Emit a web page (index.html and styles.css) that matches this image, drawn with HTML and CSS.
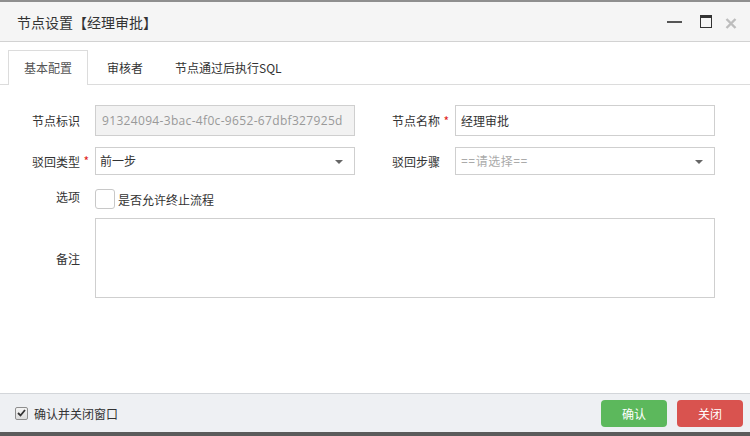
FILE: index.html
```html
<!DOCTYPE html>
<html lang="zh-CN">
<head>
  <meta charset="UTF-8">
  <link rel="stylesheet" href="styles.css">
</head>
<body>
  <div class="dialog">
    <!-- 标题栏 -->
    <div class="dialog-header">
      <span class="dialog-title">节点设置【经理审批】</span>
      <div class="win-tools">
        <span class="tool-min"></span>
        <span class="tool-max"></span>
        <span class="tool-close">
          <svg width="12" height="11" viewBox="0 0 12 11">
            <path d="M1.5 1 L10.5 10 M10.5 1 L1.5 10" stroke="#bdbdbd" stroke-width="2.4" fill="none"/>
          </svg>
        </span>
      </div>
    </div>

    <div class="dialog-body">
      <!-- 选项卡 -->
      <ul class="tabs">
        <li class="active">基本配置</li>
        <li>审核者</li>
        <li>节点通过后执行SQL</li>
      </ul>

      <!-- 基本配置表单 -->
      <div class="form-grid">
        <label class="form-label">节点标识</label>
        <input class="form-input" type="text" value="91324094-3bac-4f0c-9652-67dbf327925d" disabled>
        <label class="form-label required">节点名称</label>
        <input class="form-input" type="text" value="经理审批">

        <label class="form-label required">驳回类型</label>
        <div class="select-wrap">
          <select class="form-select">
            <option>前一步</option>
          </select>
        </div>
        <label class="form-label">驳回步骤</label>
        <div class="select-wrap">
          <select class="form-select placeholder">
            <option>==请选择==</option>
          </select>
        </div>

        <label class="form-label">选项</label>
        <div class="check-row">
          <span class="check-box"></span>
          <span class="check-text">是否允许终止流程</span>
        </div>

        <label class="form-label">备注</label>
        <textarea class="form-textarea"></textarea>
      </div>
    </div>

    <!-- 底部按钮 -->
    <div class="dialog-footer">
      <label class="footer-check">
        <span class="mini-check">
          <svg width="9" height="8" viewBox="0 0 9 8">
            <path d="M1 4 L3.5 6.5 L8 1" stroke="#333" stroke-width="1.8" fill="none"/>
          </svg>
        </span>
        确认并关闭窗口
      </label>
      <div class="footer-buttons">
        <button class="btn btn-ok">确认</button>
        <button class="btn btn-close">关闭</button>
      </div>
    </div>
  </div>
</body>
</html>
```

FILE: styles.css
```css
/* 基本 */
html, body {
  margin: 0;
  padding: 0;
  background: #5b5b5b;
}
body {
  font-family: "Open Sans", "Noto Sans CJK SC", sans-serif;
  font-size: 12px;
  color: #333;
}

/* 弹窗整体 */
.dialog {
  width: 750px;
  height: 436px;
  box-sizing: border-box;
  border-top: 2px solid #8f8f8f;
  border-bottom: 4px solid #5b5b5b;
  background: #fff;
  display: flex;
  flex-direction: column;
}

/* 标题栏 */
.dialog-header {
  height: 39px;
  flex: none;
  background: #f5f5f5;
  border-bottom: 1px solid #d2d2d2;
  display: flex;
  align-items: center;
  justify-content: space-between;
  padding: 0 13px 0 17px;
}
.dialog-title {
  font-family: "Noto Sans CJK SC", sans-serif;
  font-size: 14px;
  line-height: 20px;
  color: #333;
}
.win-tools {
  display: flex;
  align-items: center;
  height: 100%;
}
.tool-min {
  width: 15px;
  height: 2px;
  background: #555;
}
.tool-max {
  width: 10px;
  height: 9px;
  border: 1px solid #333;
  border-top-width: 3px;
  margin-left: 18px;
  margin-bottom: 1px;
}
.tool-close {
  display: flex;
  margin-left: 13px;
  margin-top: 4px;
}

/* 内容区 */
.dialog-body {
  flex: 1;
  min-height: 0;
}

/* 选项卡 */
.tabs {
  list-style: none;
  margin: 0;
  padding: 8px 0 0 8px;
  display: flex;
  border-bottom: 1px solid #dcdcdc;
}
.tabs li {
  font-family: "Noto Sans CJK SC", sans-serif;
  height: 33px;
  line-height: 33px;
  padding: 0 15px;
  border: 1px solid transparent;
  border-bottom: none;
  margin-right: 3px;
  margin-bottom: -1px;
  color: #333;
}
.tabs li:last-child {
  padding-left: 12px;
}
.tabs li.active {
  background: #fff;
  border-color: #dcdcdc;
  height: 34px;
  color: #555;
}

/* 表单布局 */
.form-grid {
  display: grid;
  grid-template-columns: 95px 260px 100px 260px;
  grid-template-rows: 31px 28px 21px 80px;
  row-gap: 11px;
  padding-top: 20px;
}
.form-label {
  font-family: "Noto Sans CJK SC", sans-serif;
  display: flex;
  align-items: center;
  justify-content: flex-end;
  padding-right: 15px;
  position: relative;
  color: #333;
}
.form-label.required::after {
  content: "*";
  position: absolute;
  right: 6px;
  top: 50%;
  margin-top: -8px;
  color: #e02020;
  font-size: 12px;
  line-height: 16px;
}

.form-input,
.form-select,
.form-textarea {
  box-sizing: border-box;
  border: 1px solid #cfcfcf;
  border-radius: 0;
  font-family: "Open Sans", "Noto Sans CJK SC", sans-serif;
  font-size: 12px;
  color: #333;
  background: #fff;
  margin: 0;
  outline: none;
}
.form-input {
  height: 31px;
  padding: 0 5px;
}
.form-input:disabled {
  background: #f2f2f2;
  color: #999;
  letter-spacing: 0.33px;
  padding-left: 6px;
}

/* 下拉框 */
.select-wrap {
  position: relative;
}
.select-wrap::after {
  content: "";
  position: absolute;
  right: 12px;
  top: 13px;
  border-left: 4px solid transparent;
  border-right: 4px solid transparent;
  border-top: 4px solid #666;
  pointer-events: none;
}
.form-select {
  -webkit-appearance: none;
  appearance: none;
  width: 100%;
  height: 28px;
  padding: 0 4px;
}
.form-select.placeholder {
  color: #aaa;
  padding-left: 5px;
  letter-spacing: 0.5px;
}

/* 选项勾选框 */
.check-row {
  display: flex;
  align-items: center;
  margin-top: 3px;
  align-self: start;
  grid-column: 2 / span 3;
}
.check-box {
  width: 18px;
  height: 18px;
  border: 1px solid #c8c8c8;
  border-radius: 3px;
  background: #fff;
}
.check-text {
  font-family: "Noto Sans CJK SC", sans-serif;
  margin-left: 3px;
  color: #333;
}

.form-textarea {
  grid-column: 2 / span 3;
  height: 80px;
  resize: none;
}

/* 底部 */
.dialog-footer {
  flex: none;
  height: 38px;
  background: #eef0f3;
  border-top: 1px solid #d3d6da;
  display: flex;
  align-items: center;
  justify-content: space-between;
  padding: 0 7px 0 15px;
}
.footer-check {
  font-family: "Noto Sans CJK SC", sans-serif;
  display: flex;
  align-items: center;
  color: #333;
}
.mini-check {
  width: 11px;
  height: 11px;
  border: 1px solid #8e8e8e;
  border-radius: 2px;
  background: linear-gradient(#f4f4f4, #dcdcdc);
  display: flex;
  align-items: center;
  justify-content: center;
  margin-right: 6px;
}
.footer-buttons {
  display: flex;
  gap: 10px;
  margin-top: 1px;
}
.btn {
  width: 66px;
  height: 27px;
  border: none;
  border-radius: 4px;
  color: #fff;
  font-family: "Noto Sans CJK SC", sans-serif;
  font-size: 12px;
  padding: 0;
  cursor: pointer;
}
.btn-ok {
  background: #5cb85c;
}
.btn-close {
  background: #d9534f;
}
```
